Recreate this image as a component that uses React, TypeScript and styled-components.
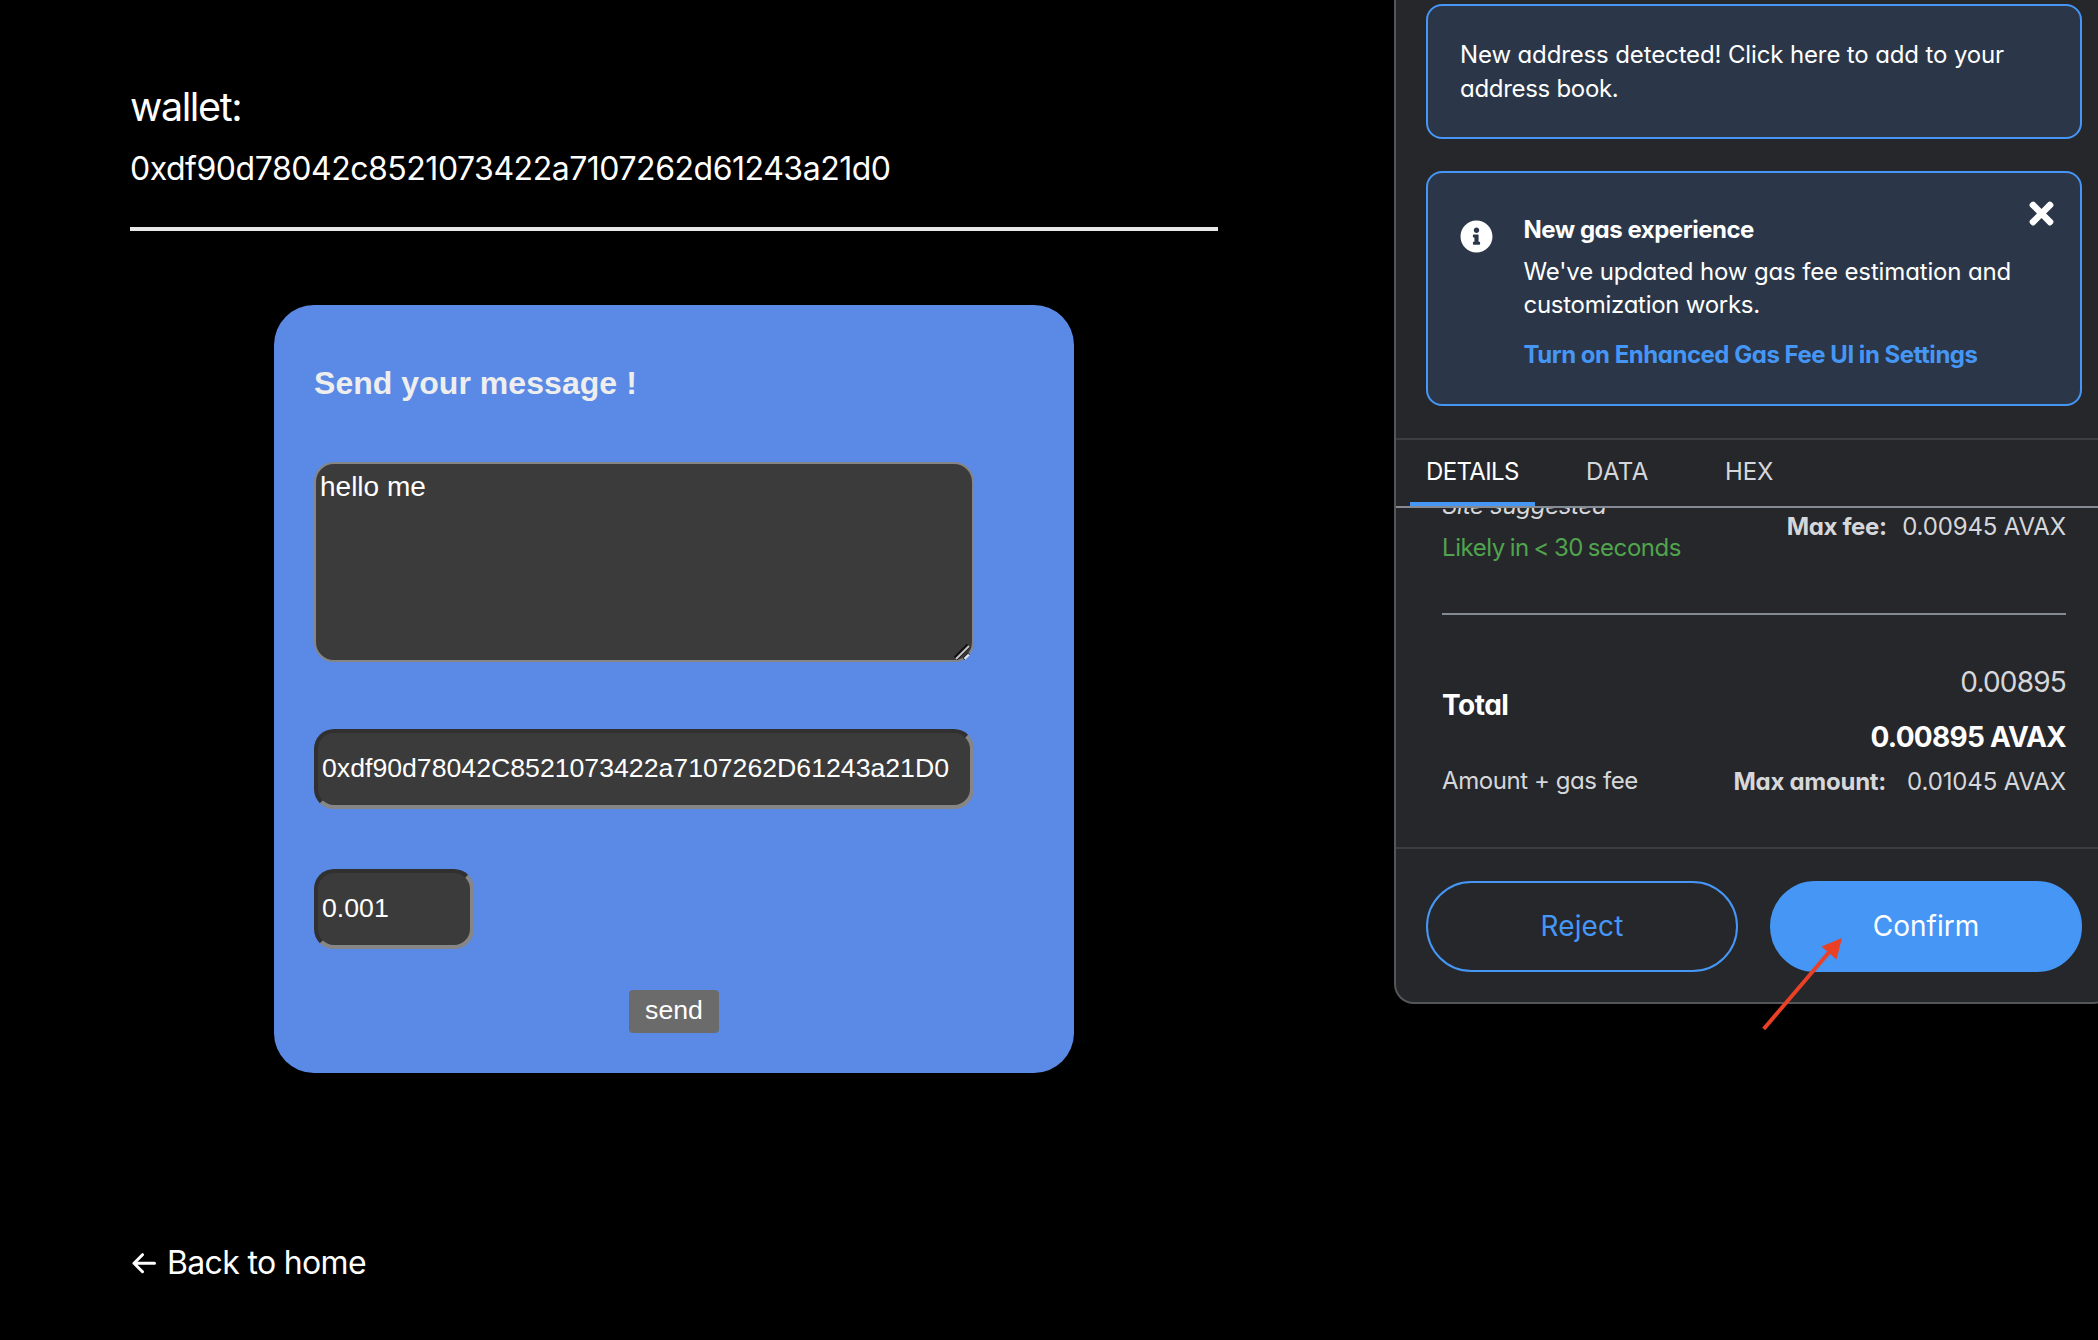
import React from "react";
import styled, { createGlobalStyle } from "styled-components";
import { FaInfoCircle, FaTimes } from "react-icons/fa";

const BLUE = "#4596f5";
const PANEL = "#26272b";
const MUTED = "#d6d7da";
const RULE = "#848b95";

const GlobalStyle = createGlobalStyle`
  * { box-sizing: border-box; }
  html, body { margin: 0; background: #000; overflow: hidden; }
`;

const Page = styled.div`
  position: relative;
  display: flex;
  align-items: flex-start;
  width: 2098px;
  height: 1340px;
  overflow: hidden;
  background: #000;
  color: #fff;
  font-family: Inter, "Liberation Sans", sans-serif;
`;

/* ---------- left: dApp ---------- */

const Main = styled.main`
  flex: 0 0 1394px;
  display: flex;
  flex-direction: column;
  align-items: flex-start;
  padding: 77px 176px 0 130px;
`;

const Label = styled.div`
  font-size: 39.5px;
  line-height: 61px;
  letter-spacing: -1.4px;
`;

const Address = styled.div`
  margin-top: 7px;
  font-size: 32px;
  line-height: 48px;
  letter-spacing: -0.47px;
`;

const Separator = styled.hr`
  width: 1088px;
  height: 4px;
  margin: 34px 0 74px;
  border: 0;
  background: #e8e8e8;
`;

const Form = styled.form`
  display: flex;
  flex-direction: column;
  align-items: flex-start;
  width: 800px;
  height: 768px;
  margin-left: 144px;
  padding: 60px 40px 0;
  border-radius: 40px;
  background: #5b8ae6;
  font-family: "Liberation Sans", Arial, sans-serif;
`;

const FormTitle = styled.h3`
  margin: 0 0 61px;
  color: #eee;
  font-size: 32px;
  line-height: 36px;
  letter-spacing: 0.05px;
`;

const MessageWrap = styled.div`
  position: relative;
  display: flex;
  width: 660px;
  height: 200px;
  margin-bottom: 67px;
`;

const Message = styled.textarea`
  flex: 1;
  resize: none;
  padding: 7px 4px;
  border: 2px solid #858585;
  border-radius: 20px;
  outline: none;
  background: #3b3b3b;
  color: #fff;
  font: 28px/32px "Liberation Sans", Arial, sans-serif;
`;

const ResizeGrip = styled.svg`
  position: absolute;
  right: 3px;
  bottom: 2px;
  width: 17px;
  height: 17px;
`;

const Field = styled.input<{ $width: number; $gap: number }>`
  width: ${(p) => p.$width}px;
  height: 80px;
  margin: 0 0 ${(p) => p.$gap}px;
  padding: 0 4px 1px;
  border: 4px solid;
  border-color: #303030 #868686 #868686 #303030;
  border-radius: 20px;
  outline: none;
  background: #3b3b3b;
  color: #fff;
  font: 26.667px "Liberation Sans", Arial, sans-serif;
`;

const SendButton = styled.button`
  align-self: center;
  width: 90px;
  height: 43px;
  padding: 0 0 2px;
  border: 0;
  border-radius: 4px;
  background: #6b6b6b;
  color: #fff;
  font: 26.667px "Liberation Sans", Arial, sans-serif;
`;

const BackLink = styled.a`
  display: flex;
  align-items: center;
  gap: 10px;
  margin-top: 166px;
  font-size: 32px;
  line-height: 48px;
  letter-spacing: -0.66px;
`;

/* ---------- right: wallet popup ---------- */

const Popup = styled.aside`
  flex: 0 0 720px;
  display: flex;
  flex-direction: column;
  height: 1004px;
  border: 2px solid #55565a;
  border-top: 0;
  border-radius: 0 0 20px 20px;
  background: ${PANEL};
  font-feature-settings: "cv11";
  font-size: 24px;
  line-height: 33.6px;
`;

const Notices = styled.div`
  display: flex;
  flex-direction: column;
  gap: 32px;
  height: 438px;
  padding: 4px 30px 0;
`;

const Notice = styled.div<{ $height: number; $top: number }>`
  position: relative;
  display: flex;
  gap: 32px;
  height: ${(p) => p.$height}px;
  padding: ${(p) => p.$top}px 32px 0;
  border: 2px solid ${BLUE};
  border-radius: 16px;
  background: #2b3748;
`;

const InfoIcon = styled(FaInfoCircle)`
  flex: none;
  width: 33px;
  height: 33px;
  margin: 7px -1px 0 -0.5px;
`;

const CloseIcon = styled(FaTimes)`
  position: absolute;
  top: 23px;
  right: 21px;
  width: 35px;
  height: 35px;
`;

const NoticeBody = styled.div`
  display: flex;
  flex-direction: column;
`;

const Text = styled.span<{ $ls?: number; $ws?: number; $bold?: boolean; $big?: boolean; $color?: string; $top?: number }>`
  display: block;
  white-space: nowrap;
  margin-top: ${(p) => p.$top ?? 0}px;
  color: ${(p) => p.$color ?? "#fff"};
  font-size: ${(p) => (p.$big ? 28 : 24)}px;
  line-height: ${(p) => (p.$big ? 39.2 : 33.6)}px;
  font-weight: ${(p) => (p.$bold ? 700 : 400)};
  letter-spacing: ${(p) => p.$ls ?? 0}px;
  word-spacing: ${(p) => p.$ws ?? 0}px;
`;

const Italic = styled(Text)`
  font-style: italic;
`;

const Tabs = styled.div`
  display: flex;
  height: 70px;
  padding-left: 14px;
  border-top: 2px solid #3c3e42;
  border-bottom: 2px solid ${RULE};
`;

const Tab = styled.div<{ $active?: boolean; $width: number; $next: number; $ls: number }>`
  display: flex;
  align-items: center;
  width: ${(p) => p.$width}px;
  margin-right: ${(p) => p.$next}px;
  padding: 1px 0 0 16px;
  border-bottom: 4px solid ${(p) => (p.$active ? BLUE : "transparent")};
  color: ${(p) => (p.$active ? "#fff" : MUTED)};
  letter-spacing: ${(p) => p.$ls}px;
`;

const Details = styled.div`
  flex: 0 0 339px;
  display: flex;
  flex-direction: column;
  overflow: hidden;
  padding: 0 46px;
`;

const Row = styled.div<{ $height: number; $shift?: number; $rule?: boolean }>`
  flex: none;
  display: flex;
  justify-content: space-between;
  height: ${(p) => p.$height}px;
  margin-top: ${(p) => p.$shift ?? 0}px;
  border-bottom: ${(p) => (p.$rule ? `2px solid ${RULE}` : "0")};
`;

const Column = styled.div<{ $end?: boolean; $top: number }>`
  display: flex;
  flex-direction: column;
  align-items: ${(p) => (p.$end ? "flex-end" : "flex-start")};
  padding-top: ${(p) => p.$top}px;
`;

const Pair = styled.div<{ $gap: number; $top?: number }>`
  display: flex;
  gap: ${(p) => p.$gap}px;
  margin-top: ${(p) => p.$top ?? 0}px;
`;

const Footer = styled.footer`
  display: flex;
  gap: 32px;
  padding: 32px 30px 0;
  border-top: 2px solid #3c3e42;
`;

const Action = styled.button<{ $primary?: boolean; $ls: number }>`
  flex: 1;
  height: 91px;
  padding: 0 0 1px;
  border: 2px solid ${BLUE};
  border-radius: 46px;
  background: ${(p) => (p.$primary ? BLUE : "transparent")};
  color: ${(p) => (p.$primary ? "#fff" : BLUE)};
  font: 28px Inter, sans-serif;
  letter-spacing: ${(p) => p.$ls}px;
`;

const Pointer = styled.svg`
  position: absolute;
  left: 1755px;
  top: 930px;
  width: 96px;
  height: 110px;
`;

export default function App() {
  return (
    <Page>
      <GlobalStyle />
      <Main>
        <Label>wallet:</Label>
        <Address>0xdf90d78042c8521073422a7107262d61243a21d0</Address>
        <Separator />
        <Form>
          <FormTitle>Send your message !</FormTitle>
          <MessageWrap>
            <Message defaultValue="hello me" spellCheck={false} />
            <ResizeGrip viewBox="0 0 17 17">
              <path d="M1.5 15.5 14.5 2.5" stroke="#111" strokeWidth="5" />
              <path d="M2 16 15 3" stroke="#c4c4c4" strokeWidth="2" />
              <path d="M9.5 16 15 10.5" stroke="#222" strokeWidth="3" />
              <path d="M10.5 15.8 15 11.5" stroke="#dfe6f2" strokeWidth="2.4" />
            </ResizeGrip>
          </MessageWrap>
          <Field $width={660} $gap={60} defaultValue="0xdf90d78042C8521073422a7107262D61243a21D0" />
          <Field $width={160} $gap={41} defaultValue="0.001" />
          <SendButton type="button">send</SendButton>
        </Form>
        <BackLink>
          <svg width="27" height="24" viewBox="0 0 27 24" fill="none" stroke="#fff" strokeWidth="3" strokeLinecap="round" strokeLinejoin="round">
            <path d="M4 12.2H24.5M12.5 3.7 4 12.2 12.5 20.7" />
          </svg>
          Back to home
        </BackLink>
      </Main>

      <Popup>
        <Notices>
          <Notice $height={135} $top={32}>
            <NoticeBody>
              <Text $ls={-0.13}>New address detected! Click here to add to your</Text>
              <Text $ls={-0.3}>address book.</Text>
            </NoticeBody>
          </Notice>
          <Notice $height={235} $top={40}>
            <InfoIcon />
            <NoticeBody>
              <Text $bold $ls={-0.48}>New gas experience</Text>
              <Text $top={8} $ls={-0.14}>We've updated how gas fee estimation and</Text>
              <Text $ls={-0.27}>customization works.</Text>
              <Text $top={16} $bold $color={BLUE} $ls={-0.48}>Turn on Enhanced Gas Fee UI in Settings</Text>
            </NoticeBody>
            <CloseIcon />
          </Notice>
        </Notices>

        <Tabs>
          <Tab $active $width={125} $next={35} $ls={-0.63}>DETAILS</Tab>
          <Tab $width={94} $next={45} $ls={0.4}>DATA</Tab>
          <Tab $width={80} $next={0} $ls={-0.1}>HEX</Tab>
        </Tabs>

        <Details>
          <Row $height={126} $shift={-19} $rule>
            <Column $top={0}>
              <Italic $color={MUTED} $ls={-0.28}>Site suggested</Italic>
              <Text $top={8} $color="#50a44d" $ls={-0.43} $ws={-1.5}>Likely in &lt; 30 seconds</Text>
            </Column>
            <Column $end $top={20.5}>
              <Pair $gap={15.5}>
                <Text $bold $color={MUTED} $ls={-0.35}>Max fee:</Text>
                <Text $color={MUTED} $ls={-0.15}>0.00945 AVAX</Text>
              </Pair>
            </Column>
          </Row>
          <Row $height={232}>
            <Column $top={70.5}>
              <Text $big $bold $ls={-0.5}>Total</Text>
              <Text $top={39.5} $color={MUTED} $ls={-0.42}>Amount + gas fee</Text>
            </Column>
            <Column $end $top={47.5}>
              <Text $big $color={MUTED} $ls={-0.8}>0.00895</Text>
              <Text $big $bold $top={15.8} $ls={-0.73}>0.00895 AVAX</Text>
              <Pair $gap={21} $top={8}>
                <Text $bold $color={MUTED} $ls={-0.27}>Max amount:</Text>
                <Text $color={MUTED} $ls={-0.13}>0.01045 AVAX</Text>
              </Pair>
            </Column>
          </Row>
        </Details>

        <Footer>
          <Action $ls={0.1}>Reject</Action>
          <Action $primary $ls={0}>Confirm</Action>
        </Footer>
      </Popup>

      <Pointer viewBox="0 0 96 110">
        <path d="M8.7 99 76 20" stroke="#ea4126" strokeWidth="4" />
        <path d="M87 8 66.5 16.5 81.5 29.5Z" fill="#ea4126" />
      </Pointer>
    </Page>
  );
}
